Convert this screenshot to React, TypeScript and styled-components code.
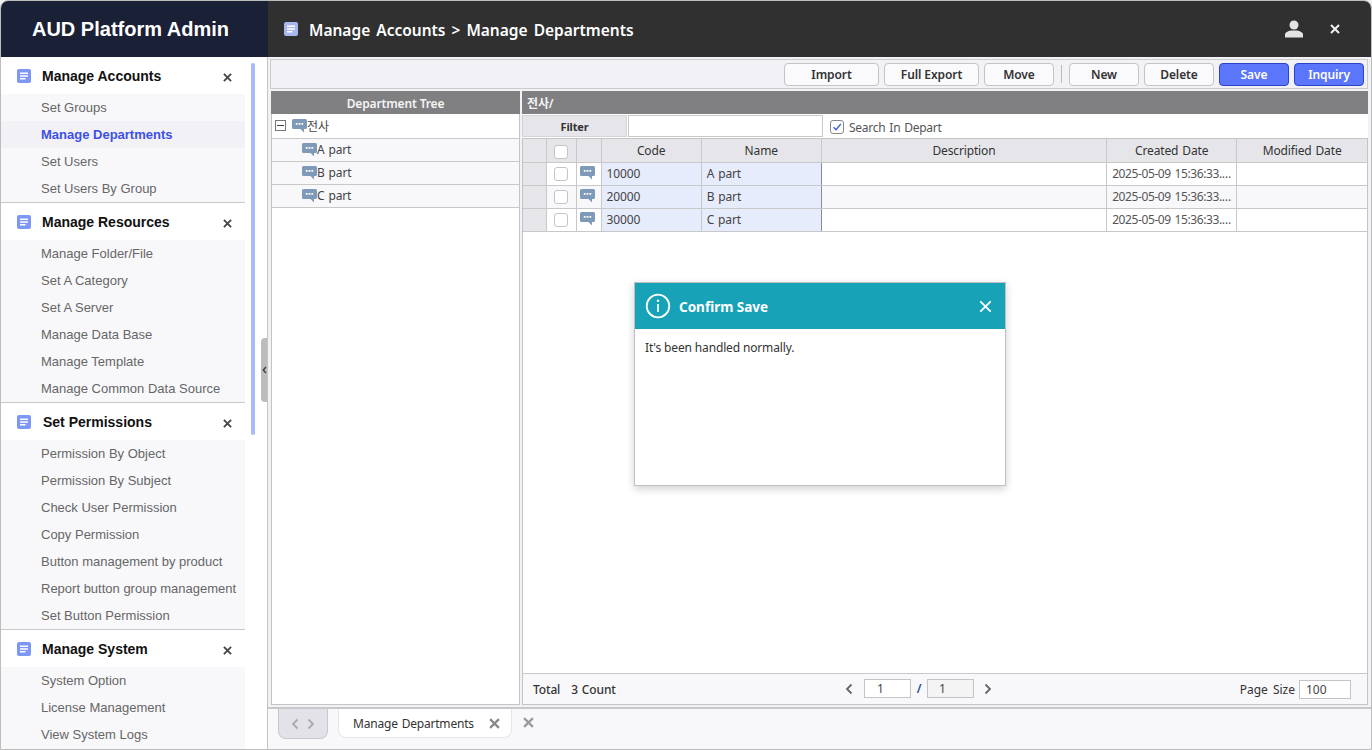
import React from 'react';
import styled, { createGlobalStyle } from 'styled-components';

const GlobalStyle = createGlobalStyle`
  html, body { margin: 0; padding: 0; height: 750px; overflow: hidden; background: #f0f0f0; }
  * { box-sizing: border-box; }
  #root { height: 750px; }
`;

const uiFont = `"Noto Sans", "Noto Sans CJK KR", sans-serif`;
const menuFont = `"Liberation Sans", Arial, sans-serif`;

const Frame = styled.div`
  position: relative;
  display: grid;
  grid-template-columns: 267px 1fr;
  grid-template-rows: 56px 1fr;
  width: 1372px;
  height: 750px;
  border: 1px solid #bdbdbd;
  border-radius: 8px 8px 0 0;
  overflow: hidden;
  font-family: ${uiFont};
  font-size: 12px;
  letter-spacing: -0.15px;
  word-spacing: 1px;
  color: #333;
  background: #f8f8fb;
`;

const Brand = styled.div`
  display: flex;
  align-items: center;
  justify-content: center;
  padding: 1px 8px 0 0;
  background: #1a2035;
  color: #fff;
  font: bold 20px ${menuFont};
  letter-spacing: 0;
  word-spacing: 0;
`;

const TopBar = styled.header`
  display: flex;
  align-items: center;
  padding: 0 31px 0 16px;
  background: #303030;
  color: #fff;
`;

const TopTitle = styled.div`
  margin-left: 11px;
  padding-top: 1px;
  font-size: 15.5px;
  font-weight: 600;
  letter-spacing: 0;
  word-spacing: 2px;
`;

const TopActions = styled.div`
  display: flex;
  align-items: center;
  gap: 27px;
  margin-left: auto;
`;

const Side = styled.aside`
  position: relative;
  background: #fff;
  overflow: hidden;
  border-right: 1px solid #c4c4c4;
`;

const SideList = styled.div`
  width: 244px;
`;

const Section = styled.section`
  border-bottom: 1px solid #c8c8c8;
  &:last-child {
    border-bottom: 0;
    padding-bottom: 4px;
    background: #f8f8fb;
  }
`;

const SectionHead = styled.div`
  display: flex;
  align-items: center;
  height: 37px;
  padding: 0 12px 0 16px;
  background: #fff;
  color: #111;
  font: bold 14px ${menuFont};
  letter-spacing: 0;
  word-spacing: 0;
`;

const SectionName = styled.span<{ $wide?: boolean }>`
  margin-left: ${(p) => (p.$wide ? 12 : 11)}px;
  flex: 1;
`;

const SectionClose = styled.span`
  display: flex;
  margin: 4px 1px 0 0;
`;

const MenuItem = styled.div<{ $active?: boolean }>`
  display: flex;
  align-items: center;
  height: 27px;
  padding-left: 40px;
  background: ${(p) => (p.$active ? '#f1f1f6' : '#f8f8fb')};
  color: ${(p) => (p.$active ? '#3c50e8' : '#666')};
  font: ${(p) => (p.$active ? 'bold' : 'normal')} 13px ${menuFont};
  letter-spacing: 0;
  word-spacing: 0;
  white-space: nowrap;
`;

const ScrollThumb = styled.div`
  position: absolute;
  left: 250px;
  top: 6px;
  width: 4px;
  height: 372px;
  border-radius: 2px;
  background: #a5bbfb;
`;

const Handle = styled.div`
  position: absolute;
  right: 0;
  top: 281px;
  display: flex;
  align-items: center;
  justify-content: center;
  width: 6px;
  height: 64px;
  border-radius: 4px 0 0 4px;
  background: #bcbcbc;
`;

const Main = styled.main`
  display: flex;
  flex-direction: column;
  min-width: 0;
  min-height: 0;
`;

const Workspace = styled.div`
  display: flex;
  flex-direction: column;
  gap: 2px;
  height: 652px;
  padding: 2px 3px 2px 2px;
  border-bottom: 2px solid #c8c8cc;
  background: #f1f1f6;
`;

const Toolbar = styled.div`
  display: flex;
  align-items: center;
  justify-content: flex-end;
  gap: 5px;
  height: 30px;
  padding-right: 3px;
  border: 1px solid #cccccc;
  background: #f1f1f6;
`;

const ToolButton = styled.button<{ $w: number; $primary?: boolean }>`
  width: ${(p) => p.$w}px;
  height: 23px;
  padding: 0;
  border: 1px solid ${(p) => (p.$primary ? '#2a44c8' : '#c4c4c4')};
  border-radius: 4px;
  background: ${(p) => (p.$primary ? '#5b76fb' : '#fafafc')};
  color: ${(p) => (p.$primary ? '#fff' : '#333')};
  font-family: ${uiFont};
  font-size: 12px;
  font-weight: 600;
  letter-spacing: -0.1px;
`;

const ToolSep = styled.span`
  width: 1px;
  height: 18px;
  margin: 0 2px;
  background: #bbb;
`;

const Panels = styled.div`
  flex: 1;
  display: flex;
  gap: 2px;
  min-height: 0;
  padding-left: 1px;
`;

const TreePanel = styled.div`
  display: flex;
  flex-direction: column;
  width: 249px;
  border: 1px solid #c4c4c4;
  border-top: 0;
  background: #fff;
`;

const DetailPanel = styled.div`
  flex: 1;
  display: flex;
  flex-direction: column;
  min-width: 0;
  background: #fff;
`;

const PanelTitle = styled.div<{ $center?: boolean }>`
  display: flex;
  align-items: center;
  justify-content: ${(p) => (p.$center ? 'center' : 'flex-start')};
  flex: none;
  height: 23px;
  padding: 1px 5px 0;
  margin: ${(p) => (p.$center ? '0 -1px' : '0')};
  background: #808082;
  color: #f4f4f4;
  font-weight: 600;
  word-spacing: 0;
`;

const TreeRow = styled.div<{ $root?: boolean }>`
  display: flex;
  align-items: center;
  height: ${(p) => (p.$root ? 25 : 23)}px;
  padding-left: ${(p) => (p.$root ? 3 : 30)}px;
  padding-bottom: 1px;
  border-bottom: 1px solid #c8c8c8;
  background: ${(p) => (p.$root ? '#fff' : '#f8f8fb')};
  color: #444;
`;

const Expander = styled.span`
  position: relative;
  width: 11px;
  height: 11px;
  margin-right: 6px;
  border: 1px solid #777;
  background: #fff;
  &::after {
    content: '';
    position: absolute;
    left: 1px;
    right: 1px;
    top: 4px;
    height: 1px;
    background: #444;
  }
`;

const FilterBar = styled.div`
  display: flex;
  align-items: flex-start;
  flex: none;
  height: 25px;
  padding-top: 1px;
  gap: 1px;
`;

const FilterLabel = styled.div`
  display: flex;
  align-items: center;
  justify-content: center;
  width: 105px;
  height: 22px;
  background: #e6e6ea;
  border: 1px solid #d4d4d8;
  color: #333;
  font-size: 11px;
  font-weight: 700;
`;

const FilterInput = styled.div`
  width: 195px;
  height: 22px;
  border: 1px solid #c8c8c8;
  background: #fff;
`;

const CheckText = styled.div`
  display: flex;
  align-items: center;
  gap: 5px;
  width: 112px;
  height: 23px;
  padding-top: 1px;
  margin-left: 6px;
  overflow: hidden;
  white-space: nowrap;
  letter-spacing: -0.25px;
  color: #555;
`;

const Box = styled.span<{ $checked?: boolean }>`
  display: inline-flex;
  align-items: center;
  justify-content: center;
  flex: none;
  width: 14px;
  height: 14px;
  vertical-align: middle;
  border: 1px solid ${(p) => (p.$checked ? '#888' : '#c4c4c4')};
  border-radius: 3px;
  background: #fff;
`;

const GridWrap = styled.div`
  flex: 1;
  min-height: 0;
  display: flex;
  flex-direction: column;
  border: 1px solid #c4c4c4;
  margin-top: -1px;
`;

const GridBody = styled.div`
  flex: 1;
`;

const Table = styled.table`
  width: 100%;
  table-layout: fixed;
  border-collapse: collapse;
  color: #444;
`;

const Col = styled.col<{ $w: number }>`
  width: ${(p) => p.$w}px;
`;

const Th = styled.th`
  height: 23px;
  padding: 0;
  background: #e6e6ea;
  border-right: 1px solid #c8c8c8;
  border-bottom: 1px solid #c8c8c8;
  font-weight: 400;
  color: #333;
  &:last-child { border-right: 0; }
`;

const Td = styled.td<{ $tone?: 'key' | 'head' | 'alt' | 'plain'; $strong?: boolean }>`
  height: 23px;
  padding: 0 5px;
  border-right: 1px solid ${(p) => (p.$strong ? '#8a8a9a' : '#c8c8c8')};
  border-bottom: 1px solid #c8c8c8;
  overflow: hidden;
  white-space: nowrap;
  text-overflow: ellipsis;
  background: ${(p) =>
    p.$tone === 'key' ? '#e6ecfc' : p.$tone === 'head' ? '#e6e6ea' : p.$tone === 'alt' ? '#f8f8fb' : '#fff'};
  &:last-child { border-right: 0; }
`;

const DateCell = styled(Td)`
  letter-spacing: -0.4px;
  color: #555;
`;

const CenterCell = styled(Td)`
  padding: 0;
  text-align: center;
  line-height: 0;
`;

const BubbleCell = styled(Td)`
  padding: 3px 3px 0 0;
  text-align: center;
  vertical-align: top;
  line-height: 0;
`;

const GridFooter = styled.div`
  position: relative;
  display: flex;
  align-items: center;
  flex: none;
  height: 31px;
  padding: 0 16px 0 10px;
  border-top: 1px solid #c8c8c8;
  background: #f8f8fb;
  color: #333;
`;

const TotalText = styled.span`
  font-weight: 500;
  word-spacing: 0;
`;

const TotalCount = styled.span`
  margin-left: 11px;
  word-spacing: 1px;
`;

const Pager = styled.div`
  position: absolute;
  left: 321px;
  top: 5px;
  display: flex;
  align-items: center;
`;

const Spacer = styled.span<{ $w: number }>`
  width: ${(p) => p.$w}px;
`;

const PageField = styled.div<{ $w: number; $pad: number; $disabled?: boolean }>`
  width: ${(p) => p.$w}px;
  height: 19px;
  padding-left: ${(p) => p.$pad}px;
  border: 1px solid #c4c4c4;
  background: ${(p) => (p.$disabled ? '#f4f4f4' : '#fff')};
  line-height: 17px;
  color: #444;
`;

const PageSlash = styled.span`
  width: 16px;
  text-align: center;
  color: #2a4a9a;
  font-weight: 600;
`;

const PageSize = styled.div`
  display: flex;
  align-items: center;
  gap: 4px;
  margin-left: auto;
  letter-spacing: 0;
  word-spacing: 2px;
`;

const TabBar = styled.div`
  flex: 1;
  display: flex;
  align-items: flex-start;
  padding-left: 10px;
`;

const TabNav = styled.div`
  display: flex;
  align-items: center;
  justify-content: center;
  gap: 6px;
  width: 50px;
  height: 30px;
  border: 1px solid #c8c8cc;
  border-top: 0;
  border-radius: 0 0 8px 8px;
  background: #e2e2e8;
`;

const Tab = styled.div`
  display: flex;
  align-items: center;
  width: 174px;
  height: 29px;
  margin-left: 10px;
  padding: 0 11px 0 14px;
  border: 1px solid #e6e6ea;
  border-top: 0;
  border-radius: 0 0 8px 8px;
  background: #fff;
  letter-spacing: -0.2px;
  color: #333;
`;

const TabClose = styled.span`
  display: flex;
  margin-left: auto;
`;

const TabCloseAll = styled.span`
  display: flex;
  margin: 8px 0 0 11px;
`;

const Modal = styled.div`
  position: absolute;
  left: 633px;
  top: 281px;
  display: flex;
  flex-direction: column;
  width: 372px;
  height: 204px;
  border: 1px solid #c0c0c0;
  background: #fff;
  box-shadow: 0 3px 8px rgba(0, 0, 0, 0.18);
`;

const ModalHead = styled.div`
  display: flex;
  align-items: center;
  flex: none;
  height: 46px;
  padding: 0 13px 0 10px;
  background: #18a2b8;
  color: #fff;
`;

const ModalTitle = styled.div`
  margin-left: 8px;
  padding-top: 1px;
  flex: 1;
  font-size: 13.5px;
  font-weight: 700;
  letter-spacing: 0;
  word-spacing: 0;
`;

const ModalBody = styled.div`
  padding: 10px;
  color: #333;
  word-spacing: 0;
`;

const BubbleSvg = styled.svg`
  flex: none;
`;

const DocIcon = ({ color = '#7d97f5', size = 14 }: { color?: string; size?: number }) => (
  <svg width={size} height={size} viewBox="0 0 14 14">
    <rect width="14" height="14" rx="2" fill={color} />
    <path d="M3 3.500h8v1.500H3zM3 6.300h8v1.500H3zM3 9.100h5.500v1.500H3z" fill="#fff" />
  </svg>
);

const XIcon = ({ size = 9, color = '#444', width = 2 }: { size?: number; color?: string; width?: number }) => (
  <svg width={size} height={size} viewBox="0 0 10 10">
    <path d="M1 1l8 8M9 1L1 9" stroke={color} strokeWidth={width} fill="none" />
  </svg>
);

const Bubble = () => (
  <BubbleSvg width="15" height="14" viewBox="0 0 15 14">
    <path d="M1.500 0h12A1.500 1.500 0 0 1 15 1.500v7a1.500 1.500 0 0 1-1.500 1.500H12v3.500L8.500 10H1.500A1.500 1.500 0 0 1 0 8.500v-7A1.500 1.500 0 0 1 1.500 0z" fill="#7f9ab8" />
    <path d="M3.800 4h1.800v1.800H3.800zM6.600 4h1.800v1.800H6.600zM9.400 4h1.800v1.800H9.400z" fill="#fff" />
  </BubbleSvg>
);

const Chevron = ({ left, color = '#777', size = 10 }: { left?: boolean; color?: string; size?: number }) => (
  <svg width={size} height={size + 2} viewBox="0 0 10 12">
    <path d={left ? 'M7.500 1.500L3 6l4.500 4.500' : 'M2.500 1.500L7 6l-4.500 4.500'} stroke={color} strokeWidth="1.800" fill="none" />
  </svg>
);

const menu = [
  { title: 'Manage Accounts', items: ['Set Groups', 'Manage Departments', 'Set Users', 'Set Users By Group'] },
  {
    title: 'Manage Resources',
    items: ['Manage Folder/File', 'Set A Category', 'Set A Server', 'Manage Data Base', 'Manage Template', 'Manage Common Data Source'],
  },
  {
    title: 'Set Permissions',
    wide: true,
    items: [
      'Permission By Object',
      'Permission By Subject',
      'Check User Permission',
      'Copy Permission',
      'Button management by product',
      'Report button group management',
      'Set Button Permission',
    ],
  },
  { title: 'Manage System', items: ['System Option', 'License Management', 'View System Logs'] },
];

const toolButtons = [
  { label: 'Import', w: 95 },
  { label: 'Full Export', w: 95 },
  { label: 'Move', w: 70 },
];

const rows = [
  { code: '10000', name: 'A part' },
  { code: '20000', name: 'B part' },
  { code: '30000', name: 'C part' },
];

const colWidths = [23, 30, 25, 100, 120, 285, 130, 130];

export default function App() {
  return (
    <>
      <GlobalStyle />
      <Frame>
        <Brand>AUD Platform Admin</Brand>
        <TopBar>
          <DocIcon color="#a8b8ee" />
          <TopTitle>Manage Accounts &gt; Manage Departments</TopTitle>
          <TopActions>
            <svg width="18" height="18" viewBox="0 0 18 18">
              <circle cx="9" cy="5" r="4.500" fill="#e4e4e4" />
              <path d="M0 17.500v-3c0-2 3-3.500 6-4h6c3 .5 6 2 6 4v3z" fill="#e4e4e4" />
            </svg>
            <XIcon size={10} color="#f0f0f0" />
          </TopActions>
        </TopBar>
        <Side>
          <SideList>
            {menu.map((group) => (
              <Section key={group.title}>
                <SectionHead>
                  <DocIcon />
                  <SectionName $wide={group.wide}>{group.title}</SectionName>
                  <SectionClose><XIcon /></SectionClose>
                </SectionHead>
                {group.items.map((item) => (
                  <MenuItem key={item} $active={item === 'Manage Departments'}>
                    {item}
                  </MenuItem>
                ))}
              </Section>
            ))}
          </SideList>
          <ScrollThumb />
          <Handle>
            <svg width="5" height="8" viewBox="0 0 5 8">
              <path d="M4 1L1.300 4 4 7" stroke="#444" strokeWidth="1.500" fill="none" />
            </svg>
          </Handle>
        </Side>
        <Main>
          <Workspace>
            <Toolbar>
              {toolButtons.map((b) => (
                <ToolButton key={b.label} $w={b.w}>
                  {b.label}
                </ToolButton>
              ))}
              <ToolSep />
              <ToolButton $w={70}>New</ToolButton>
              <ToolButton $w={70}>Delete</ToolButton>
              <ToolButton $w={70} $primary>Save</ToolButton>
              <ToolButton $w={70} $primary>Inquiry</ToolButton>
            </Toolbar>
            <Panels>
              <TreePanel>
                <PanelTitle $center>Department Tree</PanelTitle>
                <TreeRow $root>
                  <Expander />
                  <Bubble />
                  전사
                </TreeRow>
                {rows.map((r) => (
                  <TreeRow key={r.code}>
                    <Bubble />
                    {r.name}
                  </TreeRow>
                ))}
              </TreePanel>
              <DetailPanel>
                <PanelTitle>전사/</PanelTitle>
                <FilterBar>
                  <FilterLabel>Filter</FilterLabel>
                  <FilterInput />
                  <CheckText>
                    <Box $checked>
                      <svg width="10" height="10" viewBox="0 0 10 10">
                        <path d="M1.500 5.200L4 7.800 8.800 2" stroke="#3a62d8" strokeWidth="1.400" fill="none" />
                      </svg>
                    </Box>
                    Search In Department
                  </CheckText>
                </FilterBar>
                <GridWrap>
                  <GridBody>
                    <Table>
                      <colgroup>
                        {colWidths.map((w, i) => (
                          <Col key={i} $w={w} />
                        ))}
                      </colgroup>
                      <thead>
                        <tr>
                          <Th />
                          <Th><Box /></Th>
                          <Th />
                          <Th>Code</Th>
                          <Th>Name</Th>
                          <Th>Description</Th>
                          <Th>Created Date</Th>
                          <Th>Modified Date</Th>
                        </tr>
                      </thead>
                      <tbody>
                        {rows.map((r, i) => {
                          const tone = i === 1 ? 'alt' : 'plain';
                          return (
                            <tr key={r.code}>
                              <Td $tone="head" />
                              <CenterCell $tone={tone}><Box /></CenterCell>
                              <BubbleCell $tone={tone}><Bubble /></BubbleCell>
                              <Td $tone="key">{r.code}</Td>
                              <Td $tone="key" $strong>{r.name}</Td>
                              <Td $tone={tone} />
                              <DateCell $tone={tone}>2025-05-09 15:36:33.000</DateCell>
                              <Td $tone={tone} />
                            </tr>
                          );
                        })}
                      </tbody>
                    </Table>
                  </GridBody>
                  <GridFooter>
                    <TotalText>
                      Total<TotalCount>3 Count</TotalCount>
                    </TotalText>
                    <Pager>
                      <Chevron left color="#666" />
                      <Spacer $w={10} />
                      <PageField $w={47} $pad={12}>1</PageField>
                      <PageSlash>/</PageSlash>
                      <PageField $w={47} $pad={11} $disabled>1</PageField>
                      <Spacer $w={9} />
                      <Chevron color="#666" />
                    </Pager>
                    <PageSize>
                      Page Size
                      <PageField $w={52} $pad={6}>100</PageField>
                    </PageSize>
                  </GridFooter>
                </GridWrap>
              </DetailPanel>
            </Panels>
          </Workspace>
          <TabBar>
            <TabNav>
              <Chevron left color="#aaa" />
              <Chevron color="#aaa" />
            </TabNav>
            <Tab>
              Manage Departments
              <TabClose><XIcon size={11} color="#888" /></TabClose>
            </Tab>
            <TabCloseAll><XIcon size={11} color="#999" /></TabCloseAll>
          </TabBar>
        </Main>
        <Modal>
          <ModalHead>
            <svg width="26" height="26" viewBox="0 0 26 26">
              <circle cx="13" cy="13" r="11.300" stroke="#fff" strokeWidth="1.800" fill="none" />
              <path d="M13 11v8" stroke="#fff" strokeWidth="1.700" />
              <circle cx="13" cy="7.800" r="1.200" fill="#fff" />
            </svg>
            <ModalTitle>Confirm Save</ModalTitle>
            <XIcon size={13} color="#fff" width={1.4} />
          </ModalHead>
          <ModalBody>It's been handled normally.</ModalBody>
        </Modal>
      </Frame>
    </>
  );
}
